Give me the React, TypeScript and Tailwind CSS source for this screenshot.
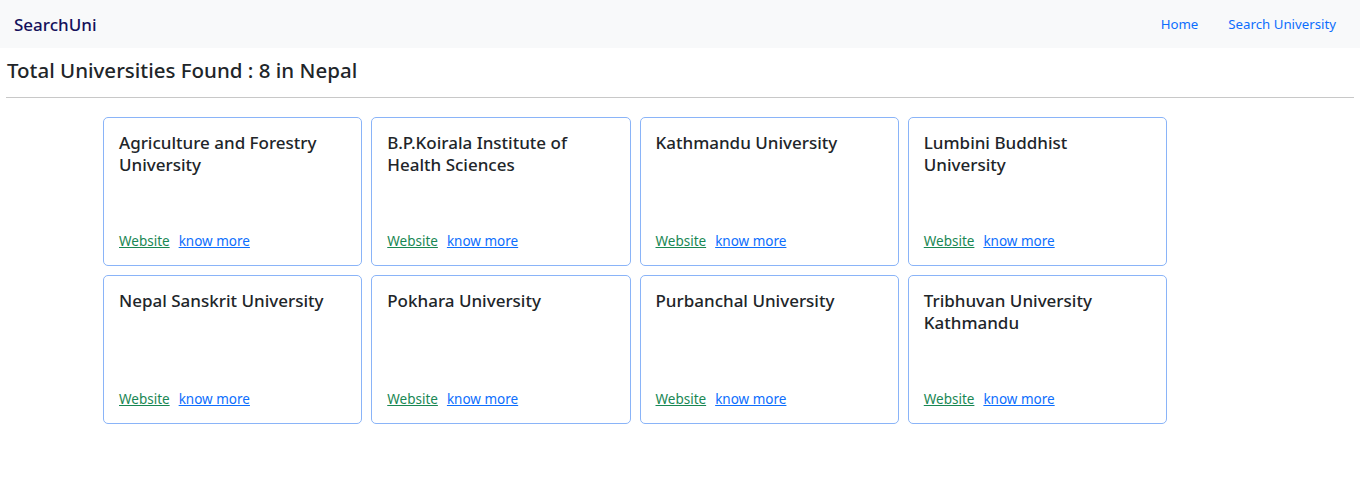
const universities = [
  "Agriculture and Forestry University",
  "B.P.Koirala Institute of Health Sciences",
  "Kathmandu University",
  "Lumbini Buddhist University",
  "Nepal Sanskrit University",
  "Pokhara University",
  "Purbanchal University",
  "Tribhuvan University Kathmandu",
];

function UniCard({ name }: { name: string }) {
  return (
    <div className="flex h-[149px] flex-col justify-between rounded-[5px] border border-[#8ab4f8] px-[15px] pt-[14px] pb-[15px]">
      <h5 className="text-[17px] leading-[22px] font-medium text-[#212529]">{name}</h5>
      <div className="flex gap-[9px] text-[13.5px] leading-[18px]">
        <a href="#" className="text-[#198754] underline">
          Website
        </a>
        <a href="#" className="text-[#0d6efd] underline">
          know more
        </a>
      </div>
    </div>
  );
}

export default function App() {
  return (
    <div className="min-h-[485px] bg-white font-['Noto_Sans',sans-serif] text-[#212529]">
      <nav className="flex h-12 items-center justify-between bg-[#f8f9fa] pt-[2px] pr-6 pl-[14px]">
        <a href="#" className="text-[17px] font-medium text-[#14105a]">
          SearchUni
        </a>
        <div className="flex items-center gap-[30px] text-[13.25px] text-[#0d6efd]">
          <a href="#">Home</a>
          <a href="#">Search University</a>
        </div>
      </nav>

      <h4 className="px-[7px] pt-[9px] text-[20.5px] leading-[26px] font-medium">
        Total Universities Found : 8 in Nepal
      </h4>
      <hr className="mx-[6px] mt-[14px] border-t border-[#c8c8c8]" />

      <div className="mt-[19px] ml-[103px] grid w-[1064px] grid-cols-4 gap-x-[9px] gap-y-[9px]">
        {universities.map((u) => (
          <UniCard key={u} name={u} />
        ))}
      </div>
    </div>
  );
}
